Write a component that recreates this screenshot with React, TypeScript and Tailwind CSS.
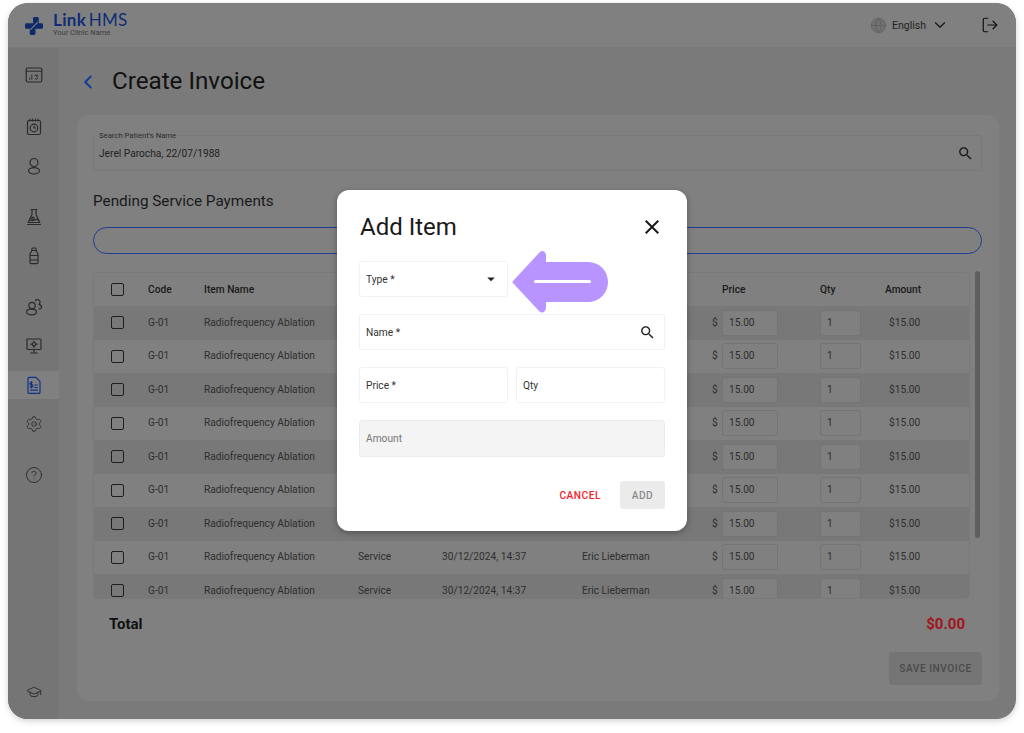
import { ChevronDown, ChevronLeft, Globe, GraduationCap, LogOut, Settings, CircleHelp } from "lucide-react";

const SearchIcon = ({ className }: { className: string }) => (
  <svg viewBox="0 0 24 24" className={className} fill="currentColor">
    <path d="M15.5 14h-.79l-.28-.27C15.41 12.59 16 11.11 16 9.5 16 5.91 13.09 3 9.5 3S3 5.91 3 9.5 5.91 16 9.5 16c1.61 0 3.09-.59 4.23-1.57l.27.28v.79l5 4.99L20.49 19l-4.99-5zm-6 0C7.01 14 5 11.99 5 9.5S7.01 5 9.5 5 14 7.01 14 9.5 11.99 14 9.5 14z" />
  </svg>
);

const stroke = { fill: "none", stroke: "currentColor", strokeWidth: 1.2, strokeLinecap: "round" as const, strokeLinejoin: "round" as const };

const ReportIcon = () => (
  <svg viewBox="0 0 18 18" className="w-[18px] h-[18px]" {...stroke}>
    <rect x="1.2" y="2" width="15.6" height="14" rx="1.5" />
    <path d="M1.2 5.2h15.6M4.6 13.2v-1M6.8 13.2V9M10 9.2h3l-1.4 1.6a1.3 1.3 0 1 1-1.5 1.7" strokeWidth={1} />
  </svg>
);
const CalendarIcon = () => (
  <svg viewBox="0 0 18 18" className="w-[18px] h-[18px]" {...stroke}>
    <rect x="2.5" y="2.5" width="13" height="14" rx="1.5" />
    <path d="M5 1v2M7.5 1v2M10.5 1v2M13 1v2" />
    <circle cx="9" cy="10" r="3.8" />
    <path d="M9 8v2h1.6" />
  </svg>
);
const PatientIcon = () => (
  <svg viewBox="0 0 18 18" className="w-[18px] h-[18px]" {...stroke}>
    <circle cx="9" cy="5.5" r="4" />
    <ellipse cx="9" cy="13.8" rx="5.5" ry="3.2" />
  </svg>
);
const LabIcon = () => (
  <svg viewBox="0 0 18 18" className="w-[18px] h-[18px]" {...stroke}>
    <path d="M6 1.5h6M7 1.5v5L3.2 14.5h11.6L11 6.5V1.5M2.5 16.5h13" />
    <circle cx="8" cy="10.5" r="1.3" />
    <path d="M5 12c2 1 3 1 4.5 0s2-1 3.5 0" />
  </svg>
);
const BottleIcon = () => (
  <svg viewBox="0 0 18 18" className="w-[18px] h-[18px]" {...stroke}>
    <rect x="7" y="1" width="4" height="2.5" rx="0.6" />
    <path d="M7 3.5 5 7v8.5A1.2 1.2 0 0 0 6.2 16.7h5.6a1.2 1.2 0 0 0 1.2-1.2V7L11 3.5M5 8.5h8M5 13h8" />
  </svg>
);
const GroupIcon = () => (
  <svg viewBox="0 0 18 18" className="w-[18px] h-[18px]" {...stroke}>
    <circle cx="7" cy="7.5" r="3.2" />
    <ellipse cx="6.5" cy="14" rx="5" ry="2.8" />
    <path d="M10.5 2.5a2.6 2.6 0 1 1 3.5 3.8c1.8.5 2.8 1.8 2.5 3-.2 1-1.2 1.5-2.5 1.5" />
  </svg>
);
const MonitorIcon = () => (
  <svg viewBox="0 0 18 18" className="w-[18px] h-[18px]" {...stroke}>
    <rect x="2" y="2" width="14" height="10.5" rx="1" />
    <path d="M9 12.5V16M5.5 16h7" />
    <circle cx="9" cy="7.2" r="1.7" />
    <path d="M9 4v1.4M9 9v1.4M5.8 7.2h1.4M10.8 7.2h1.4" />
  </svg>
);
const InvoiceIcon = () => (
  <svg viewBox="0 0 18 18" className="w-[18px] h-[18px]" {...stroke}>
    <path d="M3 2.5A1.2 1.2 0 0 1 4.2 1.3H11l4 4v10.9a1.2 1.2 0 0 1-1.2 1.2H4.2A1.2 1.2 0 0 1 3 16.2z" />
    <path d="M7.3 6.5H6a1 1 0 0 0 0 2.2h.8a1 1 0 0 1 0 2.2H5.3M6.4 5.5v6.3M9.8 9h2.6M9.8 11.5h2.6M5.5 14.2h7" />
  </svg>
);

const navItems = [
  { icon: <ReportIcon />, cls: "mb-[13px]" },
  { icon: <CalendarIcon />, cls: "" },
  { icon: <PatientIcon />, cls: "mb-[12px]" },
  { icon: <LabIcon />, cls: "" },
  { icon: <BottleIcon />, cls: "mb-[12px]" },
  { icon: <GroupIcon />, cls: "" },
  { icon: <MonitorIcon />, cls: "" },
  { icon: <InvoiceIcon />, cls: "", active: true },
  { icon: <Settings size={18} strokeWidth={1.2} />, cls: "mb-[12px]" },
  { icon: <CircleHelp size={18} strokeWidth={1.2} />, cls: "" },
];

const Sidebar = () => (
  <aside className="w-[51px] shrink-0 bg-[#757575] flex flex-col pt-[7px] pb-[8px] text-[#2b2b2b]">
    {navItems.map((item, i) => (
      <div key={i} className={`h-[39px] flex items-center ${item.cls}`}>
        <div className={`w-full h-[28px] flex items-center justify-center ${item.active ? "bg-[#808080] text-[#12318a]" : ""}`}>
          {item.icon}
        </div>
      </div>
    ))}
    <div className="mt-auto h-[39px] flex items-center justify-center">
      <GraduationCap size={16} strokeWidth={1.4} />
    </div>
  </aside>
);

const Header = () => (
  <header className="h-[45px] shrink-0 bg-[#808080] border-b border-[#797979] flex items-center pl-[17px] pr-[17px]">
    <svg viewBox="0 0 19 19" className="w-[18px] h-[18px] mr-[10px] mt-[2px]" fill="#0f2a6b">
      <rect x="0" y="6.5" width="19" height="6" rx="1.5" />
      <rect x="8.5" y="0" width="6" height="10" rx="1.5" />
      <rect x="5" y="9" width="6" height="10" rx="1.5" />
      <path d="M5.5 13.5 13.5 5.5" stroke="#808080" strokeWidth="1.1" />
    </svg>
    <div className="flex flex-col -mt-[3px] font-['Lato',sans-serif]">
      <div className="text-[17px] leading-[17px] text-[#0f2d75] tracking-[0.3px]">
        <span className="font-bold">Link</span> <span className="font-normal -ml-[2px]">HMS</span>
      </div>
      <div className="text-[7.5px] leading-[8px] mt-[1px] text-[#3d3d3d] font-['Roboto',sans-serif]">Your Clinic Name</div>
    </div>
    <Globe size={17} strokeWidth={1.1} className="ml-auto text-[#5d5d5d] fill-[#727272]" />
    <span className="ml-[5px] text-[10.5px] mt-[1px] text-[#1f1f1f]">English</span>
    <ChevronDown size={18} strokeWidth={1.8} className="ml-[5px] text-[#1a1a1a]" />
    <LogOut size={18} strokeWidth={1.6} className="ml-[32px] text-[#111]" />
  </header>
);

const gridCols = "grid grid-cols-[37px_56px_154px_84px_140px_130px_108px_65px_1fr] items-center";

const Checkbox = () => <div className="w-[13px] h-[13px] rounded-[2px] border-[1.5px] border-[#1e1e1e]" />;

const InvoiceTable = () => (
  <div className="mt-[18px] flex gap-[5px]">
    <div className="w-[877px] h-[327px] overflow-hidden rounded-[5px] border border-[#7a7a7a] text-[10.2px] leading-[12px]">
      <div className={`${gridCols} h-[33px] pl-[17px] bg-[#808080] text-[#1a1a1a] font-medium`}>
        <Checkbox />
        <span>Code</span>
        <span>Item Name</span>
        <span />
        <span />
        <span />
        <span className="pl-[10px]">Price</span>
        <span>Qty</span>
        <span>Amount</span>
      </div>
      {Array.from({ length: 9 }).map((_, i) => (
        <div key={i} className={`${gridCols} h-[33.5px] pl-[17px] text-[#2e2e2e] ${i % 2 === 0 ? "bg-[#787878]" : "bg-[#808080]"}`}>
          <Checkbox />
          <span>G-01</span>
          <span>Radiofrequency Ablation</span>
          {/* first rows sit behind the dialog */}
          <span>{i > 6 ? "Service" : ""}</span>
          <span>{i > 6 ? "30/12/2024, 14:37" : ""}</span>
          <span>{i > 6 ? "Eric Lieberman" : ""}</span>
          <div className="flex items-center gap-[4px]">
            <span className="w-[6px]">$</span>
            <div className="w-[56px] h-[26px] rounded-[3px] bg-[#808080] border border-[#747474] flex items-center pl-[6px]">15.00</div>
          </div>
          <div className="w-[41px] h-[26px] rounded-[3px] bg-[#808080] border border-[#747474] flex items-center pl-[6px]">1</div>
          <span className="pl-[4px]">$15.00</span>
        </div>
      ))}
    </div>
    <div className="w-[5px] h-[267px] -mt-[1px] rounded-full bg-[#5f5f5f]" />
  </div>
);

const Field = ({ label, className = "", children }: { label: string; className?: string; children?: React.ReactNode }) => (
  <div className={`rounded-[3px] border flex items-center justify-between pl-[6px] pr-[8px] text-[10.2px] ${className}`}>
    <span className="pt-[1px]">{label}</span>
    {children}
  </div>
);

const AddItemModal = () => (
  <div className="absolute left-[329px] top-[187px] w-[350px] h-[341px] bg-white rounded-[12px] shadow-[0_2px_6px_rgba(0,0,0,0.3)] pl-[22px] pr-[22px] pt-[21px]">
    <div className="h-[32px] flex items-center justify-between">
      <h2 className="pl-[1px] text-[24px] leading-[32px] text-[#1a1a1a]">Add Item</h2>
      <svg viewBox="0 0 24 24" className="w-[24px] h-[24px] mr-[1px] text-[#1a1a1a]" fill="currentColor">
        <path d="M19 6.41 17.59 5 12 10.59 6.41 5 5 6.41 10.59 12 5 17.59 6.41 19 12 13.41 17.59 19 19 17.59 13.41 12z" />
      </svg>
    </div>
    <div className="mt-[18px] flex flex-col gap-[17px]">
      <Field label="Type *" className="w-[149px] h-[36px] border-[#f1f1f6] text-[#333]">
        <svg viewBox="0 0 24 24" className="w-[18px] h-[18px] -mr-[1px] text-[#222]" fill="currentColor">
          <path d="M7 10l5 5 5-5z" />
        </svg>
      </Field>
      <Field label="Name *" className="h-[36px] border-[#f1f1f6] text-[#333]">
        <SearchIcon className="w-[17px] h-[17px] text-[#222]" />
      </Field>
      <div className="flex gap-[8px]">
        <Field label="Price *" className="w-[149px] h-[36px] border-[#f1f1f6] text-[#333]" />
        <Field label="Qty" className="w-[149px] h-[36px] border-[#f1f1f6] text-[#333]" />
      </div>
      <Field label="Amount" className="h-[37px] bg-[#f4f4f4] border-[#ebebeb] text-[#777]" />
    </div>
    <div className="mt-[24px] flex items-center justify-end">
      <span className="pt-[2px] text-[10.2px] font-medium tracking-[0.5px] text-[#f5222d]">CANCEL</span>
      <div className="ml-[19px] pt-[1px] w-[45px] h-[28px] rounded-[3px] bg-[#ebebeb] flex items-center justify-center text-[10.2px] font-medium tracking-[0.5px] text-[#8c8c8c]">ADD</div>
    </div>
  </div>
);

const PointerArrow = () => (
  <svg viewBox="0 0 97 64" className="absolute left-[504px] top-[247px] w-[97px] h-[64px]">
    <path
      d="M1 31 L27 3 Q29 0.5 31 1 Q34 2 34 6 L34 12 H76 A20 20 0 0 1 76 52 H34 L34 57 Q34 61 31 62.5 Q29 63 27 61 L1 33 Q0 32 1 31 Z"
      fill="#b794ff"
    />
    <rect x="22" y="30" width="57" height="3" rx="1.5" fill="#fff" />
  </svg>
);

export default function App() {
  return (
    <div className="w-[1024px] h-[733px] bg-white pt-[3px] pl-[8px] font-['Roboto',sans-serif] overflow-hidden">
      <div className="relative w-[1008px] h-[716px] rounded-[20px] overflow-hidden flex flex-col bg-[#7a7a7a] shadow-[0_2px_6px_rgba(0,0,0,0.18)]">
        <Header />
        <div className="flex flex-1 min-h-0">
          <Sidebar />
          <main className="flex-1 min-w-0 pl-[18px] pr-[17px] pb-[18px] flex flex-col">
            <div className="h-[67px] shrink-0 flex items-center">
              <ChevronLeft size={22} strokeWidth={2} className="text-[#14399c]" />
              <h1 className="ml-[13px] text-[24.2px] text-[#111]">Create Invoice</h1>
            </div>
            <section className="flex-1 rounded-[12px] bg-[#808080] pt-[20px] pl-[16px] pr-[17px] flex flex-col">
              <div className="relative h-[36px] rounded-[3px] border border-[#797979] flex items-center justify-between pl-[5px] pr-[7px]">
                <span className="absolute -top-[5px] left-[3px] px-[2px] bg-[#808080] text-[7.7px] leading-[9px] text-[#2b2b2b]">Search Patient's Name</span>
                <span className="pt-[1px] text-[10.2px] text-[#222]">Jerel Parocha, 22/07/1988</span>
                <SearchIcon className="w-[17px] h-[17px] text-[#1a1a1a]" />
              </div>
              <h3 className="mt-[20px] text-[15.3px] leading-[20px] text-[#1a1a1a]">Pending Service Payments</h3>
              <div className="mt-[16px] h-[27px] rounded-full border-[1.5px] border-[#1d3f8f]" />
              <InvoiceTable />
              <div className="mt-[14px] flex justify-between items-center pl-[16px] pr-[17px] text-[15px] leading-[22px] font-bold">
                <span className="text-[#111]">Total</span>
                <span className="text-[#a3141e]">$0.00</span>
              </div>
              <div className="mt-[17px] self-end w-[93px] h-[33px] rounded-[3px] bg-[#757575] flex items-center justify-center text-[10.2px] font-medium tracking-[0.5px] text-[#4a4a4a]">SAVE INVOICE</div>
            </section>
          </main>
        </div>
        <AddItemModal />
        <PointerArrow />
      </div>
    </div>
  );
}
